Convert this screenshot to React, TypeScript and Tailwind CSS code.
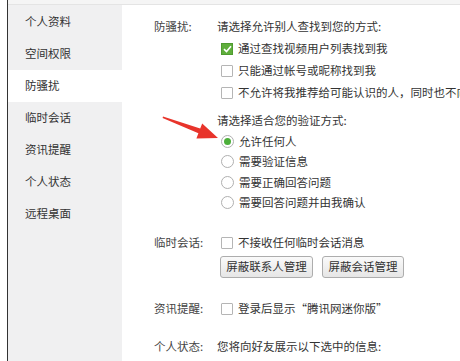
import React from "react";

const font = { fontFamily: '"Noto Sans CJK SC", "Noto Sans", sans-serif' };

const menu = ["个人资料", "空间权限", "防骚扰", "临时会话", "资讯提醒", "个人状态", "远程桌面"];

function Box({ checked }: { checked?: boolean }) {
  if (checked) {
    return (
      <span className="w-[12px] h-[12px] shrink-0 bg-[#5fae3c] border border-[#4f9b30] flex items-center justify-center">
        <svg width="9" height="8" viewBox="0 0 9 8">
          <path d="M1 4.2 L3.5 6.5 L8 1.2" stroke="#fff" strokeWidth="1.6" fill="none" />
        </svg>
      </span>
    );
  }
  return <span className="w-[12px] h-[12px] shrink-0 bg-white border border-[#b5b5b5] rounded-[1px]" />;
}

function Radio({ checked }: { checked?: boolean }) {
  return (
    <span className="w-[13px] h-[13px] shrink-0 rounded-full border border-[#b0b0b0] bg-white flex items-center justify-center">
      {checked && <span className="w-[7px] h-[7px] rounded-full bg-[#4caf3a]" />}
    </span>
  );
}

function Row({ h, children, label }: { h: string; children: React.ReactNode; label?: string }) {
  return (
    <div className={`flex items-center ${h}`}>
      <div className="w-[63px] shrink-0 text-[#444]">{label}</div>
      <div className="flex items-center gap-[5px] pl-[4px] whitespace-nowrap">{children}</div>
    </div>
  );
}

function Plain({ h, children, label, className = "" }: { h: string; children: React.ReactNode; label?: string; className?: string }) {
  return (
    <div className={`flex items-center ${h} ${className}`}>
      <div className="w-[63px] shrink-0 text-[#444]">{label}</div>
      <div className="whitespace-nowrap">{children}</div>
    </div>
  );
}

export default function App() {
  return (
    <div className="relative w-[460px] h-[361px] overflow-hidden bg-white flex text-[11.5px] leading-none text-[#333]" style={font}>
      <div className="w-[7px] shrink-0 bg-white" />
      <div className="flex-1 flex flex-col border-l-[1.5px] border-[#333]">
        <div className="h-[5px] shrink-0 bg-[#f5f5f5] border-b border-[#e4e4e4]" />
        <div className="flex flex-1">
          <div className="w-[114px] shrink-0 bg-[#f0f0f1] flex flex-col pt-[1px]">
            {menu.map(m => (
              <div key={m} className={`h-[32px] flex items-center pl-[17px] ${m === "防骚扰" ? "bg-white" : ""}`}>{m}</div>
            ))}
          </div>
          <div className="flex-1 flex flex-col pl-[32px] pt-[11px]">
            <Plain h="h-[22px]" label="防骚扰:">请选择允许别人查找到您的方式:</Plain>
            <Row h="h-[22px]"><Box checked />通过查找视频用户列表找到我</Row>
            <Row h="h-[22px]"><Box />只能通过帐号或昵称找到我</Row>
            <Row h="h-[22px]"><Box />不允许将我推荐给可能认识的人，同时也不向我推荐</Row>
            <Plain h="h-[20px]" className="mt-[7px]">请选择适合您的验证方式:</Plain>
            <Row h="h-[20.5px]"><Radio checked />允许任何人</Row>
            <Row h="h-[20.5px]"><Radio />需要验证信息</Row>
            <Row h="h-[20.5px]"><Radio />需要正确回答问题</Row>
            <Row h="h-[20.5px]"><Radio />需要回答问题并由我确认</Row>

            <div className="mt-[19px]">
              <Row h="h-[22px]" label="临时会话:"><Box />不接收任何临时会话消息</Row>
            </div>
            <div className="flex mt-[2px]">
              <div className="w-[66px] shrink-0" />
              <div className="flex gap-[9px]">
                <button className="w-[93px] h-[22px] border border-[#adadad] rounded-[3px] bg-gradient-to-b from-[#fafafa] to-[#e6e6e6] text-[11.5px] text-[#333]">屏蔽联系人管理</button>
                <button className="w-[82px] h-[22px] border border-[#adadad] rounded-[3px] bg-gradient-to-b from-[#fafafa] to-[#e6e6e6] text-[11.5px] text-[#333]">屏蔽会话管理</button>
              </div>
            </div>

            <div className="mt-[20px]">
              <Row h="h-[22px]" label="资讯提醒:"><Box />登录后显示“腾讯网迷你版”</Row>
            </div>
            <div className="mt-[16px]">
              <Plain h="h-[22px]" label="个人状态:">您将向好友展示以下选中的信息:</Plain>
            </div>
            <div className="flex items-start pt-[3px] pl-[67px]">
              <Box checked />
            </div>
          </div>
        </div>
      </div>
      <svg className="absolute left-0 top-0 pointer-events-none" width="460" height="361" viewBox="0 0 460 361">
        <polygon points="163,116.5 200.2,128.6 202.2,123.4 218,138 196.4,138.4 198.4,133.2 162.6,118" fill="#e8342b" />
      </svg>
    </div>
  );
}
